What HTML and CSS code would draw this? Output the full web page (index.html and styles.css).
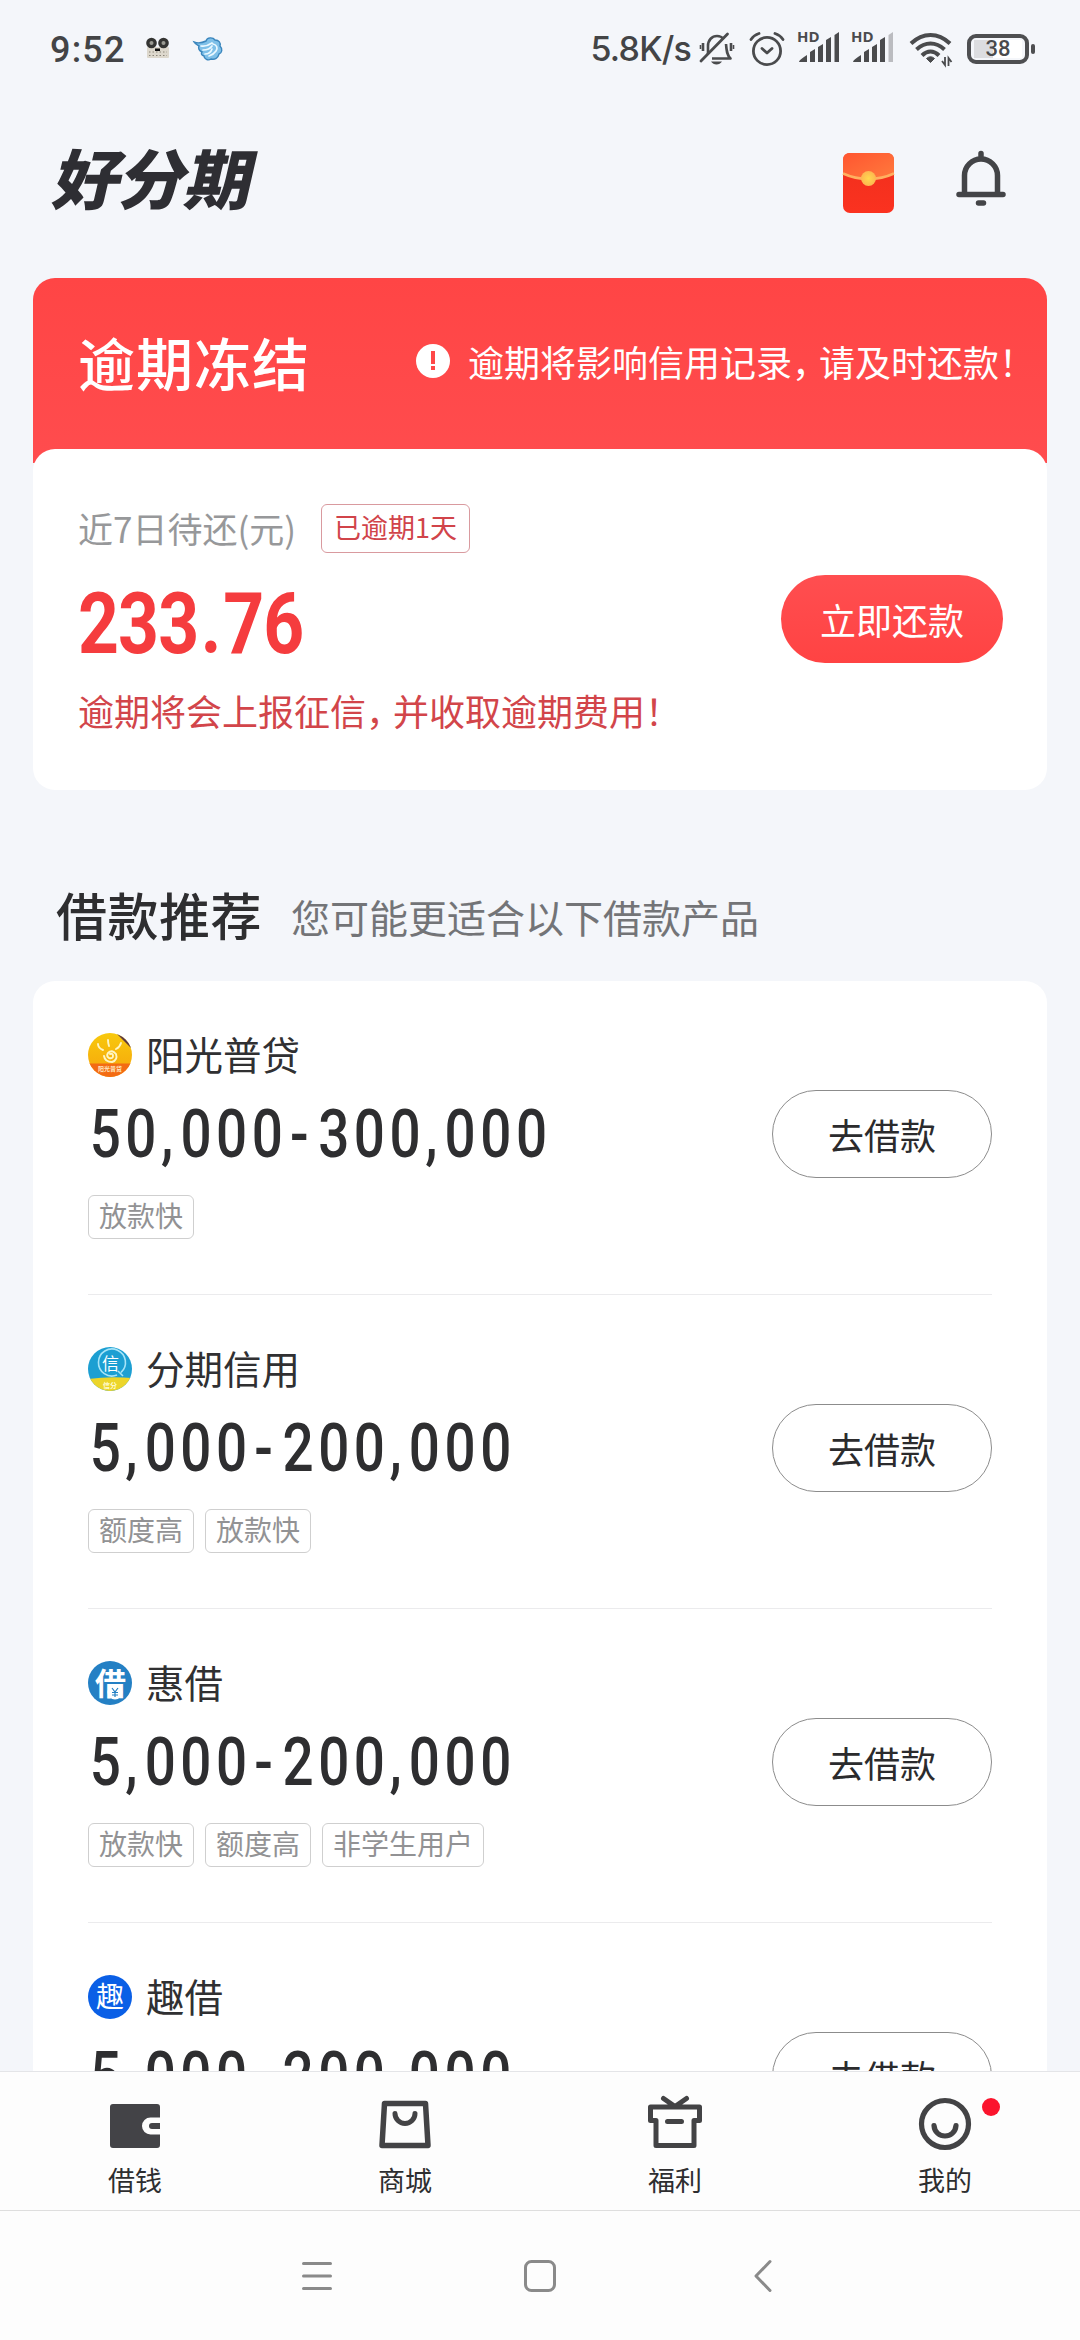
FILE: index.html
```html
<!DOCTYPE html>
<html lang="zh-CN">
<head>
<meta charset="utf-8">
<title>好分期</title>
<link rel="stylesheet" href="styles.css">
</head>
<body>
<div class="screen">
  <div class="status">
    <span class="time">9:52</span>
    <svg class="st-reel" width="24" height="24" viewBox="0 0 24 24"><rect x="1" y="10" width="22" height="11" rx="1" fill="#ddd8cd"/><circle cx="5.5" cy="6" r="5.3" fill="#343432"/><circle cx="17.5" cy="6" r="5.3" fill="#343432"/><circle cx="5.5" cy="6" r="2" fill="#9a9a92"/><circle cx="17.5" cy="6" r="2" fill="#9a9a92"/><rect x="9" y="11.5" width="5" height="2.5" fill="#111"/><path d="M3 15h18M3 18.5h18" stroke="#8b857a" stroke-width="1.2" stroke-dasharray="1.5 2"/></svg>
    <svg class="st-cloud" width="30" height="26" viewBox="0 0 30 26"><path d="M1 6c5 2 8 1 12-1 1-4 7-4 9-1 4 0 6 3 5 6 3 3 2 7-1 8-1 4-4 6-8 5-3 2-7 0-7-3-3-1-3-3-2-4-3-1-4-4-3-6C4 9 2 8 1 6z" fill="#7fc0e8" stroke="#3b86bd" stroke-width="1.4"/><path d="M8 10c5 1 8-1 11-3M10 14c4 0 7-1 9-4M12 18c4 0 6-2 7-5m1-5c4 1 5 4 3 7s-4 4-7 5" fill="none" stroke="#eaf8ff" stroke-width="1.7" stroke-linecap="round"/></svg>
    <span class="spacer"></span>
    <span class="speed">5.8K/s</span>
    <svg class="st-mute" width="36" height="34" viewBox="0 0 36 34" fill="none" stroke="#4a4b4d" stroke-width="2.6"><path d="M9 22V14c0-6 4-10 9-10 3 0 5 1 6.500 3M27 12c.5 7 1 11 4.500 14.500H13M4 11v8M27 5l0 0M32 11v8" stroke-linejoin="round"/><path d="M1.500 13v4M34.500 13v4" stroke-width="1.600"/><path d="M2 29L28.500 2" stroke-width="2.800" stroke-linecap="round"/><path d="M12 29.500h11q-2 3-5.500 3t-5.500-3z" fill="#4a4b4d" stroke="none"/></svg>
    <svg class="st-alarm" width="36" height="36" viewBox="0 0 36 36" fill="none" stroke="#4a4b4d" stroke-width="2.800" stroke-linecap="round" stroke-linejoin="round"><circle cx="18" cy="20" r="13.600"/><path d="M13 17.500l5 4.500 5-4.500M2 8.500Q5 4 10 2.500M34 8.500Q31 4 26 2.500"/></svg>
    <span class="signal"><b>HD</b><svg width="42" height="32" viewBox="0 0 42 32" fill="#4a4b4d"><path d="M1 31q0-2 8-7v7zM12 21l5-3v13h-5zM20 16l5-3v18h-5zM28 9l5-3v25h-5zM36.500 4l4.500-3v30h-4.500z"/></svg></span>
    <span class="signal second"><b>HD</b><svg width="42" height="32" viewBox="0 0 42 32" fill="#4a4b4d"><path d="M1 31q0-2 8-7v7zM12 21l5-3v13h-5zM20 16l5-3v18h-5zM28 9l5-3v25h-5z"/><path d="M36.500 4l4.500-3v30h-4.500z" fill="#bbbcc0"/></svg></span>
    <svg class="st-wifi" width="44" height="34" viewBox="0 0 44 34"><g fill="none" stroke="#4a4b4d" stroke-width="4"><path d="M2 11.500Q11 3 21.500 3T41 11.500"/><path d="M7.500 17.500Q14 11.500 21.500 11.500T35.500 17.500"/><path d="M13 23.500q4-4 8.500-4t8.500 4"/></g><path d="M17.500 26.500q4-3.500 8 0l-4 4z" fill="#4a4b4d" stroke="#4a4b4d"/><path d="M36 25v8l-3-4M39.500 34v-8l3 4" fill="none" stroke="#4a4b4d" stroke-width="1.800"/></svg>
    <span class="battery">38</span><span class="nub"></span>
  </div>

  <header class="header">
    <h1 class="logo">好分期</h1>
    <span class="spacer"></span>
    <svg class="envelope" width="53" height="62" viewBox="0 0 53 62">
      <defs>
        <linearGradient id="flap" x1="0" y1="0" x2="1" y2="1"><stop offset="0" stop-color="#ff5530"/><stop offset="1" stop-color="#ff7b3d"/></linearGradient>
        <linearGradient id="pocket" x1="0" y1="0" x2="0" y2="1"><stop offset="0" stop-color="#ef2f1c"/><stop offset="1" stop-color="#fb3220"/></linearGradient>
        <radialGradient id="coin"><stop offset="0" stop-color="#ffd84f"/><stop offset="1" stop-color="#fdb650"/></radialGradient>
      </defs>
      <rect x="1" y="1" width="51" height="60" rx="7" fill="url(#pocket)"/>
      <path d="M1 22V8q0-7 7-7h37q7 0 7 7v14q-12 5.500-25.500 5.500T1 22z" fill="url(#flap)"/>
      <path d="M1 21.500Q13 27 26.500 27T52 21.500" fill="none" stroke="#ffb060" stroke-width="2.500"/>
      <circle cx="26.500" cy="26.500" r="7.500" fill="url(#coin)"/>
    </svg>
    <svg class="bell" width="50" height="58" viewBox="0 0 50 58" fill="none" stroke="#434447" stroke-width="5.500" stroke-linecap="round"><path d="M25 3.500V8M8.500 44V25.500a16.500 16.500 0 0 1 33 0V44M3 44.500H47M22.500 53h5"/></svg>
  </header>

  <section class="due">
    <div class="due-head">
      <h2>逾期冻结</h2>
      <span class="warn-dot"><i></i></span>
      <p>逾期将影响信用记录<span class="comma">，</span>请及时还款！</p>
    </div>
    <div class="due-body">
      <div class="due-info">
        <div class="due-label"><span>近7日待还(元)</span><em>已逾期1天</em></div>
        <div class="due-sum">233<span class="dot">.</span>76</div>
        <p class="due-note">逾期将会上报征信<span class="comma">，</span>并收取逾期费用！</p>
      </div>
      <button class="pay">立即还款</button>
    </div>
  </section>

  <div class="rec-title"><h2>借款推荐</h2><p>您可能更适合以下借款产品</p></div>

  <main class="list">
    <article class="loan">
      <div class="loan-info">
        <div class="loan-name">
          <svg width="44" height="44" viewBox="0 0 44 44">
            <clipPath id="sun"><circle cx="22" cy="22" r="22"/></clipPath>
            <linearGradient id="sky" x1="0" y1="0" x2="0" y2="1"><stop offset="0" stop-color="#f8c90d"/><stop offset="1" stop-color="#f6a40c"/></linearGradient>
            <g clip-path="url(#sun)"><rect width="44" height="44" fill="url(#sky)"/><path d="M28 0h16v16z" fill="#5d3943"/><path d="M0 30.500h44V44H0z" fill="#f36b13"/></g>
            <path d="M22 21q3-1 3 2 0 3-4 2-3-2-1-5 4-4 8 1 2 6-4 8-7 0-8-6M10 11q0 4 5 6M20 7q0 3 1 6M33 10q-1 4-5 6" fill="none" stroke="#fff6c4" stroke-width="1.900" stroke-linecap="round"/>
            <text x="22" y="38" text-anchor="middle" font-size="6" font-weight="700" fill="#ffe7c0">阳光普贷</text>
          </svg>
          <span>阳光普贷</span>
        </div>
        <div class="range">50<i>,</i>000<u>-</u>300<i>,</i>000</div>
        <div class="tags"><span>放款快</span></div>
      </div>
      <button class="borrow">去借款</button>
    </article>
    <article class="loan">
      <div class="loan-info">
        <div class="loan-name">
          <svg width="44" height="44" viewBox="0 0 44 44">
            <clipPath id="xin"><circle cx="22" cy="22" r="22"/></clipPath>
            <g clip-path="url(#xin)"><rect width="44" height="44" fill="#1c9fd2"/><path d="M0 32q22-3 44-1v13H0z" fill="#ecd52a"/></g>
            <path d="M33 25.500a13.500 13.500 0 1 0-4 2.500M30 24l5 5" fill="none" stroke="#a5e4f8" stroke-width="1.600"/>
            <text x="22.500" y="23" text-anchor="middle" font-size="17" fill="#fff">信</text>
            <text x="22" y="41" text-anchor="middle" font-size="7" font-weight="700" fill="#fffbd0">信分</text>
          </svg>
          <span>分期信用</span>
        </div>
        <div class="range">5<i>,</i>000<u>-</u>200<i>,</i>000</div>
        <div class="tags"><span>额度高</span><span>放款快</span></div>
      </div>
      <button class="borrow">去借款</button>
    </article>
    <article class="loan">
      <div class="loan-info">
        <div class="loan-name">
          <svg width="44" height="44" viewBox="0 0 44 44">
            <circle cx="22" cy="22" r="22" fill="#2480c4"/>
            <text x="22.500" y="33.500" text-anchor="middle" font-size="31" font-weight="700" fill="#fff">借</text>
            <circle cx="27" cy="31" r="7.500" fill="#fff"/>
            <path d="M24 27l3 4 3-4M27 31v5M24 31.500h6M24 34h6" fill="none" stroke="#2480c4" stroke-width="1.200"/>
          </svg>
          <span>惠借</span>
        </div>
        <div class="range">5<i>,</i>000<u>-</u>200<i>,</i>000</div>
        <div class="tags"><span>放款快</span><span>额度高</span><span>非学生用户</span></div>
      </div>
      <button class="borrow">去借款</button>
    </article>
    <article class="loan">
      <div class="loan-info">
        <div class="loan-name">
          <svg width="44" height="44" viewBox="0 0 44 44"><circle cx="22" cy="22" r="22" fill="#0a5fe6"/><text x="22" y="32" text-anchor="middle" font-size="28" fill="#fff">趣</text></svg>
          <span>趣借</span>
        </div>
        <div class="range">5<i>,</i>000<u>-</u>200<i>,</i>000</div>
      </div>
      <button class="borrow">去借款</button>
    </article>
  </main>

  <nav class="tabs">
    <a class="tab"><svg width="56" height="56" viewBox="0 0 56 56"><path d="M6 5h44q3 0 3 3v10.500h-9.500a8.500 8.500 0 0 0 0 17H53V46q0 3-3 3H6q-3 0-3-3V8q0-3 3-3z" fill="#434347"/><path d="M53 24H45a3 3 0 0 0 0 6h8z" fill="#434347"/></svg><span>借钱</span></a>
    <a class="tab"><svg width="56" height="56" viewBox="0 0 56 56" fill="none" stroke="#434345" stroke-width="5.500" stroke-linejoin="round" stroke-linecap="round"><path d="M7.500 4.500h41L51 46.500H5z"/><path d="M18 14.500a10 10 0 0 0 20 0" stroke-width="5"/></svg><span>商城</span></a>
    <a class="tab"><svg width="56" height="56" viewBox="0 0 56 56" fill="none" stroke="#434345" stroke-width="5" stroke-linejoin="round" stroke-linecap="round"><path d="M9 21.500H3.500V8h49v13.500H47M9 21.500V46.500h38V21.500M20.500 22.500H34.500M16.500-.5L28 7.500 39.500-.5"/></svg><span>福利</span></a>
    <a class="tab"><svg width="56" height="56" viewBox="0 0 56 56" fill="none" stroke="#434345" stroke-width="5.200" stroke-linecap="round"><circle cx="28" cy="25" r="23.500"/><path d="M17 26.500c1 14 21 14 22 0"/></svg><span>我的</span><b class="badge"></b></a>
  </nav>

  <div class="sysnav">
    <svg width="34" height="34" viewBox="0 0 34 34" stroke="#8a8a8a" stroke-width="3" stroke-linecap="round"><path d="M3.500 4.500h27M3.500 17h27M3.500 29.500h27"/></svg>
    <svg width="34" height="34" viewBox="0 0 34 34" fill="none" stroke="#8a8a8a" stroke-width="3"><rect x="2.500" y="2.500" width="29" height="29" rx="6"/></svg>
    <svg width="34" height="34" viewBox="0 0 34 34" fill="none" stroke="#8a8a8a" stroke-width="3" stroke-linecap="round" stroke-linejoin="round"><path d="M24 2.500L10 17l14 14.500"/></svg>
  </div>
</div>
</body>
</html>
```
FILE: styles.css
```css
* { box-sizing: border-box; margin: 0; padding: 0; }
body {
  background: #f4f6fa;
  font-family: "Noto Sans CJK SC", sans-serif;
  color: #2e2e30;
  -webkit-font-smoothing: antialiased;
}
.screen {
  width: 1080px;
  height: 2340px;
  display: flex;
  flex-direction: column;
  overflow: hidden;
}
svg { flex: none; overflow: visible; }
button { font: inherit; border: 0; flex: none; white-space: nowrap; }
i, em, u { font-style: normal; text-decoration: none; }
.spacer { flex: 1; }

/* system status bar */
.status {
  flex: none;
  height: 98px;
  padding: 0 45px 0 50px;
  display: flex;
  align-items: center;
}
.time { font: 500 36px/40px Roboto, sans-serif; width: 96px; letter-spacing: 1.2px; color: #434446; padding-top: 2px; }
.st-cloud { margin-left: 23px; }
.speed { font: 500 34px/40px Inter, sans-serif; color: #434446; letter-spacing: -.8px; }
.st-mute { margin-left: 8px; }
.st-alarm { margin-left: 14px; }
.signal { position: relative; margin-left: 13px; width: 42px; height: 32px; margin-top: -4px; }
.signal b { position: absolute; left: -1px; top: -4px; font: 700 15px/18px "Open Sans", sans-serif; color: #4a4b4d; }
.signal.second { margin-left: 12px; }
.st-wifi { margin-left: 15px; }
.battery {
  margin-left: 14px;
  width: 62px;
  height: 30px;
  border: 4px solid #4e4f51;
  border-radius: 9px;
  background: linear-gradient(90deg, #dcdde0 19px, #fff 19px) 3px 2px / 48px 18px no-repeat;
  font: 500 22px/22px Roboto, sans-serif;
  text-align: center;
  color: #4a4b4d;
}
.nub { width: 4px; height: 10px; border-radius: 2px; background: #4e4f51; margin-left: 2px; }

/* page header */
.header {
  flex: none;
  height: 180px;
  padding: 0 74px 10px 57px;
  display: flex;
  align-items: center;
}
.logo {
  font-size: 67px;
  line-height: 80px;
  font-weight: 900;
  letter-spacing: -1px;
  color: #2e2e33;
  transform: translateY(-7px) skewX(-13deg) scaleY(.97);
}
.bell { margin: -8px 0 0 61px; }

/* overdue card */
.due { flex: none; margin: 0 33px; height: 512px; }
.due-head {
  height: 185px;
  padding: 0 0 20px 45px;
  border-radius: 22px 22px 0 0;
  background: linear-gradient(#ff4545, #ff4c4e);
  color: #fff;
  display: flex;
  align-items: center;
  white-space: nowrap;
}
.due-head h2 { font-size: 57px; line-height: 70px; font-weight: 500; letter-spacing: 1px; width: 338px; }
.warn-dot {
  width: 34px; height: 34px; border-radius: 50%; background: #fff;
  display: flex; justify-content: center; align-items: center;
}
.warn-dot i { width: 4px; height: 19px; background: linear-gradient(#ff4848 13px, #fff 13px 15px, #ff4848 15px); }
.due-head p { font-size: 36px; line-height: 48px; margin-left: 18px; }
.comma { margin-right: -9px; }
.due-body {
  margin-top: -14px;
  height: 341px;
  background: #fff;
  border-radius: 22px;
  padding: 55px 44px 0 45px;
  display: flex;
  justify-content: space-between;
}
.due-label { display: flex; align-items: center; height: 49px; font-size: 35px; color: #97989a; white-space: nowrap; }
.due-label span { width: 243px; margin-top: -2px; }
.due-label em {
  height: 49px; width: 149px; line-height: 44px; text-align: center;
  border: 1px solid #d99a9f; border-radius: 6px;
  font-size: 27px; color: #d1444a;
}
.due-sum {
  font: 700 86px/100px Roboto, sans-serif;
  letter-spacing: -1px;
  color: #f53c3e;
  margin-top: 21px;
  height: 100px;
  transform: scaleX(.83);
  transform-origin: left;
}
.due-sum .dot { margin: 0 3px; }
.due-note { font-size: 36px; line-height: 48px; margin-top: 12px; color: #d2454a; }
.pay {
  margin-top: 71px;
  width: 222px;
  height: 88px;
  border-radius: 44px;
  background: linear-gradient(#ff4e50, #ff4343);
  color: #fff;
  font-size: 36px;
  line-height: 84px;
}

/* recommendations */
.rec-title {
  flex: none;
  height: 191px;
  padding: 87px 0 0 56px;
  display: flex;
  align-items: flex-start;
}
.rec-title h2 { font-size: 51px; line-height: 70px; font-weight: 500; width: 235px; margin-top: 2px; letter-spacing: .5px; white-space: nowrap; }
.rec-title p { font-size: 39px; line-height: 60px; color: #737477; margin-top: 9px; }
.list {
  flex: 1;
  min-height: 0;
  overflow: hidden;
  margin: 0 33px;
  background: #fff;
  border-radius: 22px 22px 0 0;
  padding: 0 55px;
}
.loan {
  height: 314px;
  padding-top: 52px;
  border-bottom: 1px solid #ebebed;
  display: flex;
  justify-content: space-between;
}
.loan-name { display: flex; align-items: center; height: 44px; gap: 14px; font-size: 38.500px; color: #303032; }
.loan-name span { line-height: 44px; margin-top: -4px; }
.range {
  font: 500 66px/76px Roboto, sans-serif;
  letter-spacing: 5.500px;
  height: 76px;
  margin-top: 20px;
  white-space: nowrap;
  transform: scaleX(.83);
  transform-origin: left;
  padding-left: 2px;
}
.range i { margin-right: 3px; }
.range u { margin: 0 6px 0 3px; }
.tags { display: flex; gap: 11px; margin-top: 22px; }
.tags span {
  height: 44px; line-height: 39px; padding: 0 10px;
  border: 1px solid #cfcfcf; border-radius: 6px;
  font-size: 28px; color: #929294;
}
.borrow {
  margin-top: 57px;
  width: 220px;
  height: 88px;
  border: 1px solid #8c8c8c;
  border-radius: 44px;
  background: #fff;
  color: #2b2b2d;
  font-size: 36px;
  line-height: 82px;
}

/* tab bar */
.tabs {
  flex: none;
  height: 140px;
  border-top: 1px solid #e4e5e8;
  border-bottom: 1px solid #dedede;
  background: #fdfdfd;
  display: grid;
  grid-template-columns: repeat(4, 1fr);
}
.tab { position: relative; display: flex; flex-direction: column; align-items: center; padding-top: 27px; font-size: 27px; }
.tab span { line-height: 32px; margin-top: 9px; }
.badge { position: absolute; left: 172px; top: 26px; width: 18px; height: 18px; border-radius: 50%; background: #fb142d; }

/* system navigation */
.sysnav {
  flex: none;
  height: 129px;
  background: #fdfdfd;
  display: flex;
  justify-content: center;
  align-items: center;
  gap: 189px;
}
```
